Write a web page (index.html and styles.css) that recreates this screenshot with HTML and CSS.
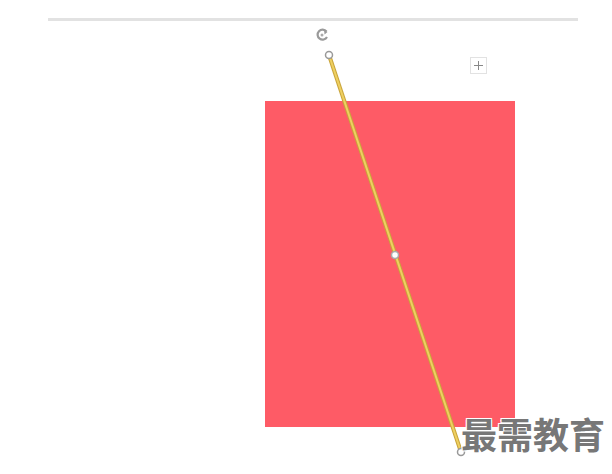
FILE: index.html
```html
<!DOCTYPE html>
<html>
<head>
<meta charset="utf-8">
<link rel="stylesheet" href="styles.css">
</head>
<body>
<div class="page">
  <div class="rule"></div>
  <div class="canvas">
    <svg class="shapes" width="612" height="474" viewBox="0 0 612 474">
      <rect x="265" y="101" width="250" height="326" fill="#fe5b66"/>
      <line x1="329" y1="55" x2="461" y2="452" stroke="#c9a43a" stroke-width="4"/>
      <line x1="329" y1="55" x2="461" y2="452" stroke="#efd060" stroke-width="2"/>
      <path d="M326.5 31.5A5 5 0 1 0 327 37" fill="none" stroke="#9a9a9a" stroke-width="2.2"/>
      <path d="M324 29.5l3.5 2.5-3 2.5z" fill="#9a9a9a"/>
      <circle cx="322" cy="35" r="1.5" fill="#aaa"/>
      <circle cx="329" cy="55" r="3.5" fill="#fff" stroke="#999" stroke-width="1.5"/>
      <circle cx="395" cy="255" r="3.5" fill="#fff" stroke="#aaa" stroke-width="1.5"/>
      <circle cx="461" cy="452" r="3.5" fill="#fff" stroke="#999" stroke-width="1.5"/>
      <rect x="470.5" y="57.5" width="16" height="16" fill="#fff" stroke="#e2e2e2"/>
      <path d="M478.5 61v9M474 65.5h9" stroke="#888" stroke-width="1"/>
    </svg>
    <div class="watermark">最需教育</div>
  </div>
</div>
</body>
</html>
```

FILE: styles.css
```css
html, body {
  margin: 0;
  padding: 0;
  background: #ffffff;
}
.page {
  position: relative;
  width: 612px;
  height: 474px;
  overflow: hidden;
}
.rule {
  margin: 18px 34px 0 48px;
  height: 3px;
  background: #e2e2e2;
}
.canvas {
  position: absolute;
  left: 0;
  top: 0;
  width: 612px;
  height: 474px;
}
.shapes {
  position: absolute;
  left: 0;
  top: 0;
}
.watermark {
  position: absolute;
  left: 461px;
  top: 409px;
  font-family: "Noto Sans CJK SC", sans-serif;
  font-weight: 700;
  font-size: 36px;
  line-height: 48px;
  color: #777777;
  text-shadow: 1px 1px 0 #fff, -1px -1px 0 #fff, 1px -1px 0 #fff, -1px 1px 0 #fff;
  white-space: nowrap;
}
```
